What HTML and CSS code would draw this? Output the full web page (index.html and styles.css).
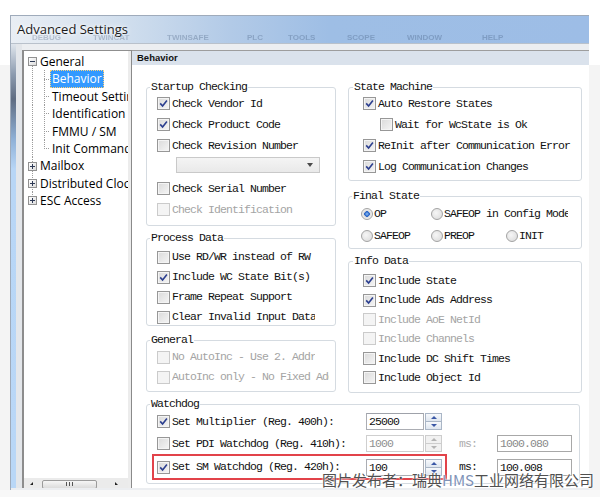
FILE: index.html
```html
<!DOCTYPE html>
<html>
<head>
    <meta charset="UTF-8">
    <title>Advanced Settings</title>
    <link rel="stylesheet" href="styles.css">
</head>
<body>
<div class="screen">
    <div class="window">
        <div class="titlebar">
            <div class="ghost-menu">
                <span>DEBUG</span><span>TWINCAT</span><span>TWINSAFE</span><span>PLC</span><span>TOOLS</span><span>SCOPE</span><span>WINDOW</span><span>HELP</span>
            </div>
            <span class="title">Advanced Settings</span>
        </div>

        <div class="frame">
            <div class="edge"></div>

            <div class="tree">
                <ul class="tree-list">
                    <li class="node is-first"><span class="toggle is-open"></span>General</li>
                    <li class="leaf"><span class="leaf-text is-selected">Behavior</span></li>
                    <li class="leaf"><span class="leaf-text">Timeout Settings</span></li>
                    <li class="leaf"><span class="leaf-text">Identification</span></li>
                    <li class="leaf"><span class="leaf-text">FMMU / SM</span></li>
                    <li class="leaf is-last"><span class="leaf-text">Init Commands</span></li>
                    <li class="node"><span class="toggle"></span>Mailbox</li>
                    <li class="node"><span class="toggle"></span>Distributed Clocks</li>
                    <li class="node is-last"><span class="toggle"></span>ESC Access</li>
                </ul>
                <div class="hscroll">
                    <span class="arrow arrow-left"></span>
                    <span class="thumb"><span class="grip"></span></span>
                    <span class="arrow arrow-right"></span>
                </div>
            </div>

            <div class="panel">
                <div class="panel-head">Behavior</div>
                <div class="panel-body">
                    <div class="cols">
                        <div class="col col-left">
                            <div class="group group-startup">
                                <div class="group-title">Startup Checking</div>
                                <div class="row"><span class="cb is-on"><svg class="tick" viewBox="0 0 9 9"><path d="M1.2 4.4 3.6 7.1 7.9 1.5"/></svg></span>Check Vendor Id</div>
                                <div class="row"><span class="cb is-on"><svg class="tick" viewBox="0 0 9 9"><path d="M1.2 4.4 3.6 7.1 7.9 1.5"/></svg></span>Check Product Code</div>
                                <div class="row"><span class="cb"></span>Check Revision Number</div>
                                <div class="pick"><span class="select"><span class="caret"></span></span></div>
                                <div class="row"><span class="cb"></span>Check Serial Number</div>
                                <div class="row is-disabled"><span class="cb"></span>Check Identification</div>
                            </div>

                            <div class="group group-process">
                                <div class="group-title">Process Data</div>
                                <div class="row"><span class="cb"></span><span class="clip">Use RD/WR instead of RW</span></div>
                                <div class="row"><span class="cb is-on"><svg class="tick" viewBox="0 0 9 9"><path d="M1.2 4.4 3.6 7.1 7.9 1.5"/></svg></span><span class="clip">Include WC State Bit(s)</span></div>
                                <div class="row"><span class="cb"></span><span class="clip">Frame Repeat Support</span></div>
                                <div class="row"><span class="cb"></span><span class="clip">Clear Invalid Input Data</span></div>
                            </div>

                            <div class="group group-general">
                                <div class="group-title">General</div>
                                <div class="row is-disabled"><span class="cb"></span><span class="clip">No AutoInc - Use 2. Addr</span></div>
                                <div class="row is-disabled"><span class="cb"></span><span class="clip clip-wide">AutoInc only - No Fixed Addr</span></div>
                            </div>
                        </div>

                        <div class="col col-right">
                            <div class="group group-state">
                                <div class="group-title">State Machine</div>
                                <div class="row"><span class="cb is-on"><svg class="tick" viewBox="0 0 9 9"><path d="M1.2 4.4 3.6 7.1 7.9 1.5"/></svg></span>Auto Restore States</div>
                                <div class="row row-indent"><span class="cb"></span>Wait for WcState is Ok</div>
                                <div class="row"><span class="cb is-on"><svg class="tick" viewBox="0 0 9 9"><path d="M1.2 4.4 3.6 7.1 7.9 1.5"/></svg></span>ReInit after Communication Error</div>
                                <div class="row"><span class="cb is-on"><svg class="tick" viewBox="0 0 9 9"><path d="M1.2 4.4 3.6 7.1 7.9 1.5"/></svg></span>Log Communication Changes</div>
                            </div>

                            <div class="group group-final">
                                <div class="group-title">Final State</div>
                                <div class="radios">
                                    <div class="row"><span class="rb is-on"></span>OP</div>
                                    <div class="row row-span"><span class="rb"></span><span class="clip clip-mode">SAFEOP in Config Mode</span></div>
                                    <div class="row"><span class="rb"></span>SAFEOP</div>
                                    <div class="row"><span class="rb"></span>PREOP</div>
                                    <div class="row"><span class="rb"></span>INIT</div>
                                </div>
                            </div>

                            <div class="group group-info">
                                <div class="group-title">Info Data</div>
                                <div class="row"><span class="cb is-on"><svg class="tick" viewBox="0 0 9 9"><path d="M1.2 4.4 3.6 7.1 7.9 1.5"/></svg></span>Include State</div>
                                <div class="row"><span class="cb is-on"><svg class="tick" viewBox="0 0 9 9"><path d="M1.2 4.4 3.6 7.1 7.9 1.5"/></svg></span>Include Ads Address</div>
                                <div class="row is-disabled"><span class="cb"></span>Include AoE NetId</div>
                                <div class="row is-disabled"><span class="cb"></span>Include Channels</div>
                                <div class="row"><span class="cb"></span>Include DC Shift Times</div>
                                <div class="row"><span class="cb"></span>Include Object Id</div>
                            </div>
                        </div>
                    </div>

                    <div class="group group-watchdog">
                        <div class="group-title">Watchdog</div>
                        <div class="wd-row wd-row-1">
                            <div class="wd-main">
                                <span class="cb is-on"><svg class="tick" viewBox="0 0 9 9"><path d="M1.2 4.4 3.6 7.1 7.9 1.5"/></svg></span>
                                <span class="wd-label">Set Multiplier (Reg. 400h):</span>
                                <span class="field">25000</span>
                                <span class="spin"><span class="spin-up"></span><span class="spin-down"></span></span>
                            </div>
                        </div>
                        <div class="wd-row wd-row-2">
                            <div class="wd-main">
                                <span class="cb"></span>
                                <span class="wd-label">Set PDI Watchdog (Reg. 410h):</span>
                                <span class="field is-disabled">1000</span>
                                <span class="spin is-disabled"><span class="spin-up"></span><span class="spin-down"></span></span>
                            </div>
                            <span class="unit is-disabled">ms:</span>
                            <span class="field field-ms is-readonly">1000.080</span>
                        </div>
                        <div class="wd-row wd-row-3 is-marked">
                            <div class="wd-main">
                                <span class="cb is-on"><svg class="tick" viewBox="0 0 9 9"><path d="M1.2 4.4 3.6 7.1 7.9 1.5"/></svg></span>
                                <span class="wd-label">Set SM Watchdog (Reg. 420h):</span>
                                <span class="field">100</span>
                                <span class="spin"><span class="spin-up"></span><span class="spin-down"></span></span>
                            </div>
                            <span class="unit">ms:</span>
                            <span class="field field-ms">100.008</span>
                        </div>
                    </div>
                </div>
            </div>
        </div>
    </div>

    <div class="watermark">图片发布者：瑞典<span class="hms">HMS</span>工业网络有限公司</div>
</div>
</body>
</html>
```

FILE: styles.css
```css
BODY {
    margin: 0;
    background: #fff;
    font: 11.5px/1 "Liberation Mono", monospace;
    letter-spacing: -0.9px;
    color: #111;
    }
UL {
    margin: 0;
    padding: 0;
    list-style: none;
    }

.screen {
    position: relative;
    width: 600px;
    height: 497px;
    padding: 15px 0 0 10px;
    box-sizing: border-box;
    overflow: hidden;
    background: linear-gradient(to bottom, #fff 65px, #f4f4f4 65px, #f4f4f4 490px, #f8f8f8 490px);
    }

/* window frame */
.window {
    display: flex;
    flex-direction: column;
    width: 579px;
    height: 475px;
    box-sizing: border-box;
    border-top: 1px solid #9fabbb;
    border-left: 1px solid #9fabbb;
    background: #eceef1;
    }
.titlebar {
    position: relative;
    height: 27px;
    flex: none;
    background: linear-gradient(to right, #e9eef4 0%, #d3e0ee 18%, #b2cae7 38%, #9ebee5 55%, #9dbde6 100%);
    border-bottom: 1px solid #b9c1cb;
    }
.title {
    position: relative;
    display: block;
    padding-left: 6px;
    font: 13px/27px "Open Sans", sans-serif;
    letter-spacing: 0;
    color: #1b1b1b;
    text-shadow: 0 0 6px #fff, 0 0 3px #fff;
    }
.ghost-menu {
    position: absolute;
    top: 18px;
    left: 21px;
    display: flex;
    font: bold 8px/8px "Liberation Sans", sans-serif;
    letter-spacing: 0;
    color: rgba(40, 60, 95, .26);
    filter: blur(.7px);
    }
    .ghost-menu SPAN:nth-child(1) { width: 61px; }
    .ghost-menu SPAN:nth-child(2) { width: 74px; }
    .ghost-menu SPAN:nth-child(3) { width: 80px; }
    .ghost-menu SPAN:nth-child(4) { width: 41px; }
    .ghost-menu SPAN:nth-child(5) { width: 59px; }
    .ghost-menu SPAN:nth-child(6) { width: 60px; }
    .ghost-menu SPAN:nth-child(7) { width: 75px; }

.frame {
    flex: 1;
    display: flex;
    padding-bottom: 2px;
    min-height: 0;
    }
.edge {
    width: 11px;
    flex: none;
    background:
        linear-gradient(to right, transparent 5px, #e3e6ea 5px),
        linear-gradient(to bottom, #dfe5ec 0, #8d9cb0 30px, #5e6c82 55px, #8fb0d6 95px, #b8d6f6 125px, #b9d7f7 100%);
    }

/* tree */
.tree {
    display: flex;
    flex-direction: column;
    width: 110px;
    flex: none;
    margin-top: 6px;
    box-sizing: border-box;
    border-top: 1px solid #8f8f8f;
    border-left: 2px solid #8d8d8d;
    border-right: 1px solid #8a8a8a;
    background: #fff;
    box-shadow: inset -3px 0 0 #ececec;
    font: 12px/17.4px "Open Sans", sans-serif;
    letter-spacing: 0;
    color: #000;
    overflow: hidden;
    }
.tree-list {
    flex: 1;
    padding-top: 2px;
    white-space: nowrap;
    overflow: hidden;
    margin-right: 3px;
    }
.node {
    display: flex;
    align-items: center;
    height: 17.4px;
    background: repeating-linear-gradient(to bottom, #9c9c9c 0 1px, transparent 1px 2px) 8px 0 / 1px 100% no-repeat;
    }
    .node.is-first {
        background-position: 8px 100%;
        background-size: 1px 50%;
        }
    .node.is-last {
        background-position: 8px 0;
        background-size: 1px 50%;
        }
.toggle {
    position: relative;
    width: 9px;
    height: 9px;
    margin: 0 3px 0 4px;
    box-sizing: border-box;
    border: 1px solid #919191;
    background: linear-gradient(135deg, #fff, #dcdcdc);
    flex: none;
    }
    .toggle::before {
        content: "";
        position: absolute;
        left: 1px;
        top: 3px;
        width: 5px;
        height: 1px;
        background: #2e3a55;
        }
    .toggle::after {
        content: "";
        position: absolute;
        left: 3px;
        top: 1px;
        width: 1px;
        height: 5px;
        background: #2e3a55;
        }
    .toggle.is-open::after {
        display: none;
        }
.leaf {
    height: 17.4px;
    padding-left: 26px;
    background:
        repeating-linear-gradient(to bottom, #9c9c9c 0 1px, transparent 1px 2px) 8px 0 / 1px 100% no-repeat,
        repeating-linear-gradient(to bottom, #9c9c9c 0 1px, transparent 1px 2px) 20px 0 / 1px 100% no-repeat,
        repeating-linear-gradient(to right, #9c9c9c 0 1px, transparent 1px 2px) 20px 50% / 6px 1px no-repeat;
    }
    .leaf.is-last {
        background-size: 1px 100%, 1px 50%, 6px 1px;
        }
.leaf-text {
    display: inline-block;
    padding: 0 2px;
    height: 17.4px;
    }
    .leaf-text.is-selected {
        background: #3399ff;
        color: #fff;
        outline: 1px dotted #ffd27a;
        outline-offset: -1px;
        }
.hscroll {
    display: flex;
    align-items: center;
    height: 10px;
    flex: none;
    background: #ebebeb;
    margin-right: 3px;
    }
.arrow {
    width: 0;
    height: 0;
    border-top: 3px solid transparent;
    }
.arrow-left {
    margin-left: 6px;
    border-right: 3px solid #222;
    }
.arrow-right {
    margin-left: 18px;
    border-left: 3px solid #222;
    }
.thumb {
    display: flex;
    align-items: center;
    justify-content: center;
    width: 55px;
    height: 9px;
    margin-left: 9px;
    margin-top: 2px;
    box-sizing: border-box;
    border: 1px solid #9b9b9b;
    border-radius: 2px;
    background: linear-gradient(#f6f6f6, #dcdcdc);
    }
.grip {
    width: 7px;
    height: 4px;
    background: repeating-linear-gradient(to right, #555 0 1px, transparent 1px 3px);
    }

/* settings panel */
.panel {
    flex: 1;
    display: flex;
    flex-direction: column;
    margin-top: 6px;
    border-top: 1px solid #9d9d9d;
    background: #fff;
    min-width: 0;
    }
.panel-head {
    height: 14px;
    padding-left: 5px;
    background: #dae2ec;
    font: bold 9.5px/14px "Liberation Sans", sans-serif;
    letter-spacing: 0;
    color: #111;
    flex: none;
    }
.panel-body {
    flex: 1;
    padding: 22px 0 0 14px;
    }
.cols {
    display: flex;
    align-items: flex-start;
    gap: 12px;
    }
.col-left {
    width: 190px;
    }
.col-right {
    width: 234px;
    }

/* group boxes */
.group {
    box-sizing: border-box;
    border: 1px solid #d5dbe1;
    border-radius: 3px;
    padding-left: 10px;
    }
.group-title {
    display: table;
    height: 12px;
    margin: -7px 0 0 -7px;
    padding: 0 1px;
    background: #fff;
    line-height: 12px;
    color: #111;
    }
.group-startup { height: 139px; }
.group-process { height: 88px; margin-top: 12px; }
.group-general { height: 52px; margin-top: 14px; }
.group-state { height: 94px; padding-left: 14px; }
.group-final { height: 53px; margin-top: 15px; padding-left: 12px; }
.group-info { height: 132px; margin-top: 12px; padding-left: 14px; }
.group-watchdog { width: 434px; height: 80px; margin-top: 11px; padding-left: 5px; }

.group-state .group-title,
.group-info .group-title { margin-left: -10px; }
.group-final .group-title { margin-left: -9px; }
.group-watchdog .group-title { margin-left: -2px; }

.row {
    display: flex;
    align-items: center;
    height: 21px;
    white-space: nowrap;
    }
.group-process .group-title { margin-bottom: 3px; }
.group-process .row { height: 20px; }
.group-general .group-title { margin-bottom: 1px; }
.group-general .row { height: 20px; }
.group-final .group-title { margin-bottom: 1px; }
.group-info .group-title { margin-bottom: 4px; }
.group-info .row { height: 19.4px; }
.row-indent {
    padding-left: 17px;
    }
.row.is-disabled {
    color: #a4a4a4;
    }
.clip {
    display: block;
    width: 143px;
    overflow: hidden;
    }
.clip-wide {
    width: 157px;
    }
.clip-mode {
    width: 124px;
    }

/* checkbox / radio */
.cb {
    display: flex;
    align-items: center;
    justify-content: center;
    width: 13px;
    height: 13px;
    margin-right: 2px;
    flex: none;
    box-sizing: border-box;
    border: 1px solid #979797;
    background: linear-gradient(135deg, #dadada, #f5f5f5);
    box-shadow: inset 0 0 0 1px #f4f4f4;
    }
.is-disabled .cb {
    border-color: #cbcbcb;
    background: #f4f4f4;
    box-shadow: none;
    }
.tick {
    width: 9px;
    height: 9px;
    fill: none;
    stroke: #2c3f8f;
    stroke-width: 1.6;
    }
.rb {
    width: 12px;
    height: 12px;
    margin-right: 1px;
    flex: none;
    box-sizing: border-box;
    border: 1px solid #a3a3a3;
    border-radius: 50%;
    background: radial-gradient(circle at 40% 40%, #f6f6f6, #d8d8d8);
    }
    .rb.is-on {
        background: radial-gradient(circle, #8fc0f5 0, #1e5cc4 2.5px, #dadada 3px, #f2f2f2 5px);
        }
.radios {
    display: grid;
    grid-template-columns: 70px 75px auto;
    grid-auto-rows: 22px;
    }
    .radios .row {
        height: 22px;
        }
    .radios .row-span {
        grid-column: span 2;
        }

/* pick list */
.pick {
    height: 21px;
    }
.select {
    display: flex;
    align-items: center;
    justify-content: flex-end;
    width: 144px;
    height: 16px;
    margin: 1px 0 0 19px;
    padding-right: 6px;
    box-sizing: border-box;
    border: 1px solid #c9c9c9;
    background: linear-gradient(#f4f4f4, #e9e9e9);
    }
.caret {
    width: 0;
    height: 0;
    border-left: 3.5px solid transparent;
    border-right: 3.5px solid transparent;
    border-top: 4px solid #4a4a4a;
    }

/* watchdog */
.wd-row {
    display: flex;
    align-items: center;
    white-space: nowrap;
    }
.wd-row-1 { height: 23px; }
.wd-row-2 { height: 21px; }
.wd-row-3 { height: 26px; }
.wd-main {
    display: flex;
    align-items: center;
    width: 295px;
    height: 100%;
    box-sizing: border-box;
    padding-left: 3px;
    border: 2px solid transparent;
    }
.is-marked .wd-main {
    border-color: #e2434a;
    }
.wd-label {
    width: 194px;
    flex: none;
    }
.field {
    width: 58px;
    height: 17px;
    flex: none;
    box-sizing: border-box;
    padding-left: 2px;
    border: 1px solid #abadb3;
    border-top-color: #9fa2aa;
    background: #fff;
    line-height: 15px;
    color: #111;
    }
    .field.is-disabled {
        border-color: #cfcfcf;
        color: #909090;
        }
    .field.is-readonly {
        color: #8a8a8a;
        }
.field-ms {
    width: 75px;
    border-color: #a8a8a8;
    }
.unit {
    width: 38px;
    margin-left: 12px;
    }
    .unit.is-disabled {
        color: #acacac;
        }
.spin {
    display: flex;
    flex-direction: column;
    width: 17px;
    height: 17px;
    margin-left: 1px;
    flex: none;
    }
.spin-up,
.spin-down {
    flex: 1;
    display: flex;
    align-items: center;
    justify-content: center;
    border: 1px solid #aab6c6;
    background: linear-gradient(#f7f9fc, #dfe6ef);
    }
.spin-down {
    border-top: 0;
    }
    .spin-up::after,
    .spin-down::after {
        content: "";
        width: 0;
        height: 0;
        border-left: 3px solid transparent;
        border-right: 3px solid transparent;
        }
    .spin-up::after {
        border-bottom: 3px solid #3b58a6;
        }
    .spin-down::after {
        border-top: 3px solid #3b58a6;
        }
.spin.is-disabled .spin-up,
.spin.is-disabled .spin-down {
    border-color: #cdcdcd;
    background: #f1f1f1;
    }
.spin.is-disabled .spin-up::after { border-bottom-color: #b4b4b4; }
.spin.is-disabled .spin-down::after { border-top-color: #b4b4b4; }

/* watermark over the screenshot */
.watermark {
    position: absolute;
    left: 322px;
    top: 471px;
    font: 15px/18px "Noto Sans CJK SC", sans-serif;
    letter-spacing: 0;
    color: #505050;
    white-space: nowrap;
    text-shadow: 0 0 2px #fff, 0 0 2px #fff;
    }
.hms {
    color: #8093b8;
    }
```
